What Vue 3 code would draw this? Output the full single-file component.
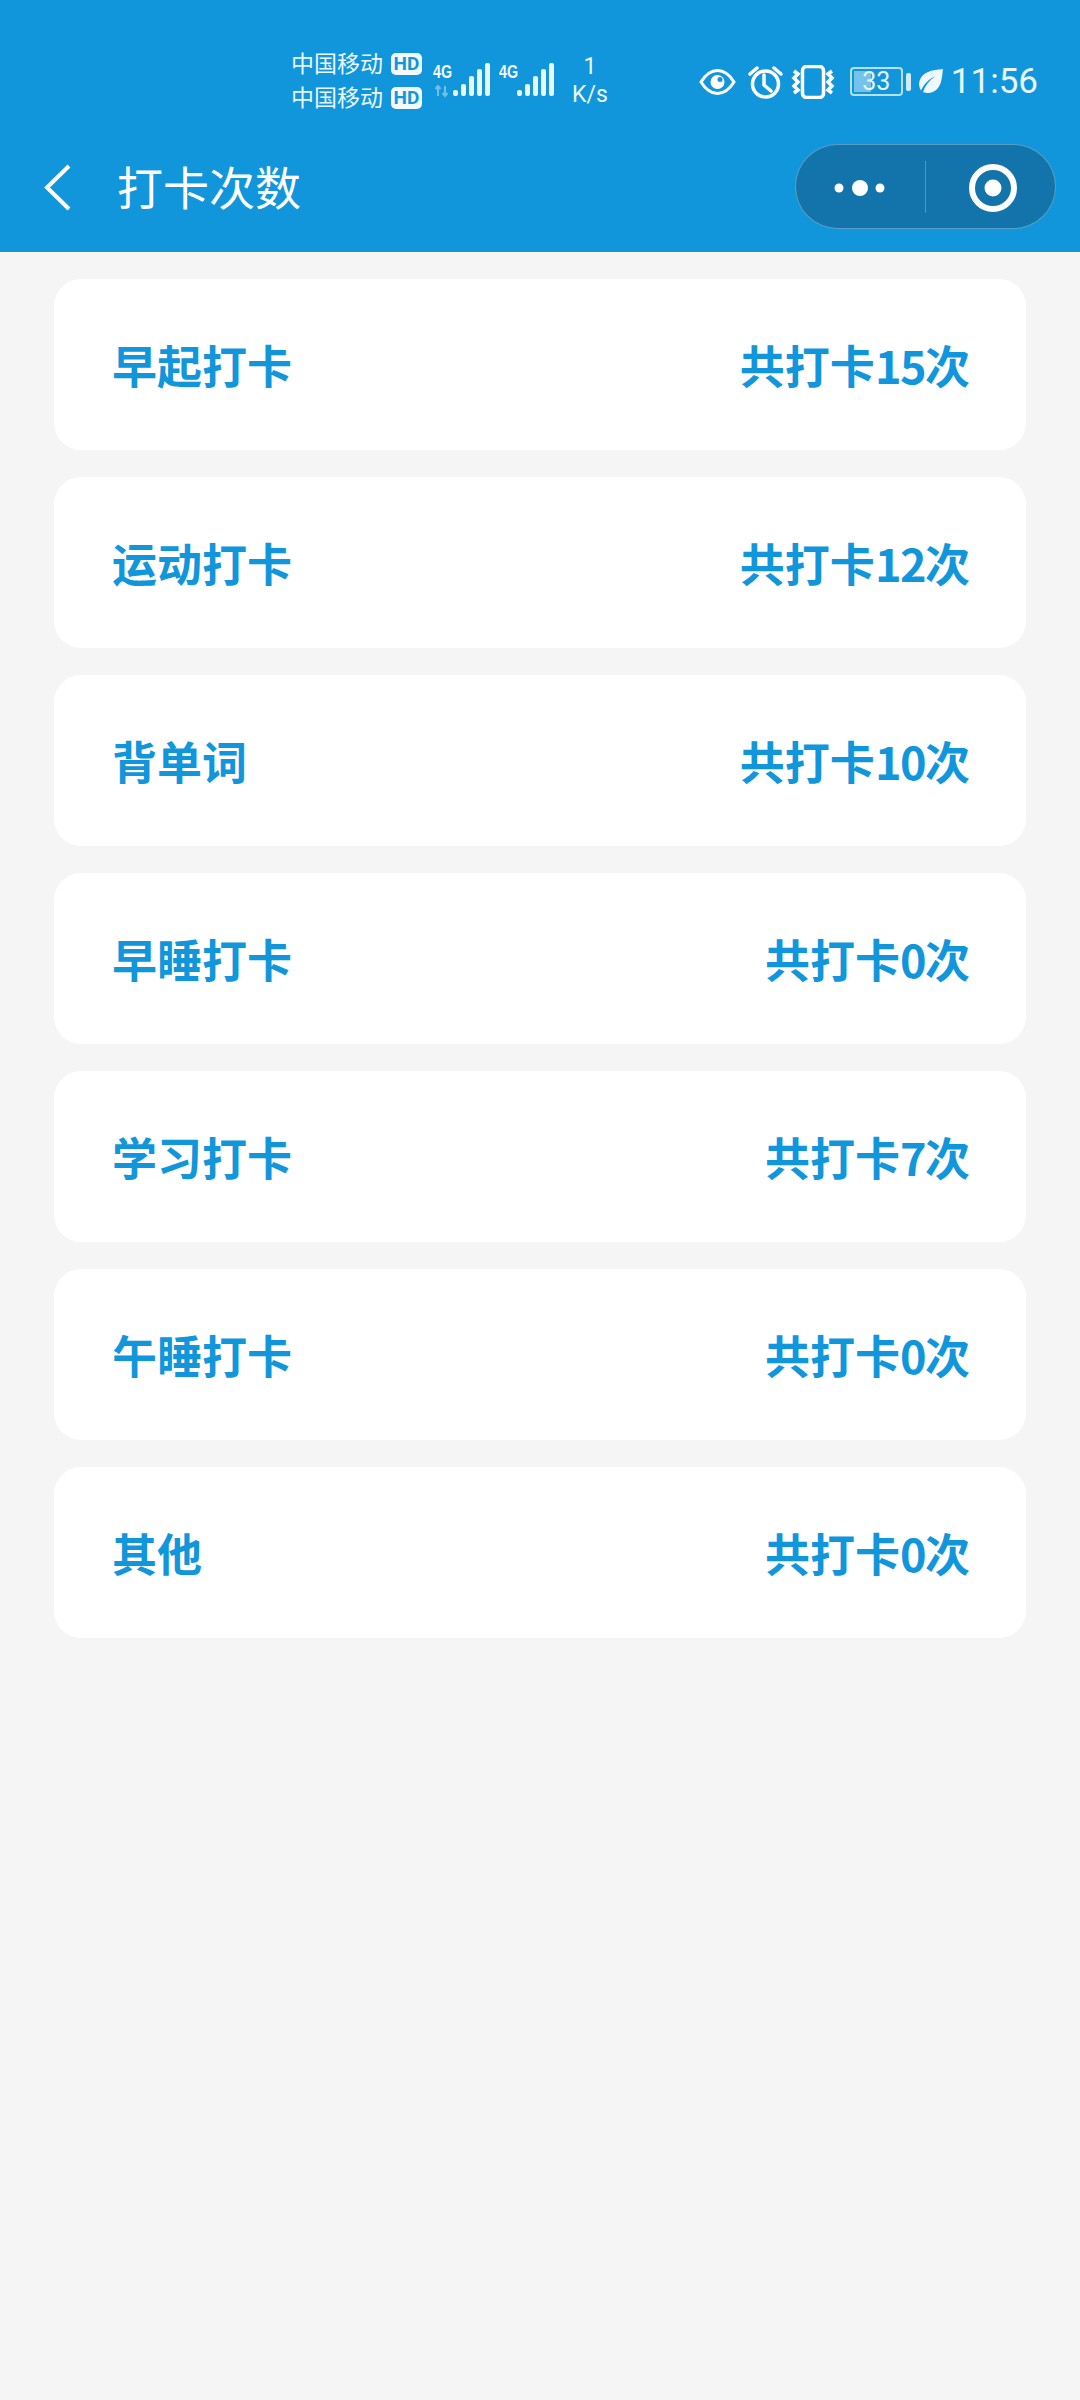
<template>
  <div class="page">
    <div class="top">
      <div class="status-bar">
        <div class="carriers">
          <div v-for="n in 2" :key="n" class="carrier">
            <span>中国移动</span>
            <span class="hd">HD</span>
          </div>
        </div>

        <svg class="signal" width="58" height="48" viewBox="0 -6 58 48">
          <text x="0" y="15" class="net" textLength="19" lengthAdjust="spacingAndGlyphs">4G</text>
          <path d="M5 33V23M2.500 26L5 23l2.500 3M12 23v10M9.500 30l2.500 3 2.500-3" stroke="#fff" stroke-opacity=".4" stroke-width="2" fill="none"/>
          <rect v-for="(h, i) in bars" :key="i" :x="20 + i * 8" :y="33 - h" width="5" :height="h" rx="2" fill="#eaf6fd"/>
        </svg>
        <svg class="signal second" width="56" height="48" viewBox="0 -6 56 48">
          <text x="0" y="15" class="net" textLength="19" lengthAdjust="spacingAndGlyphs">4G</text>
          <rect v-for="(h, i) in bars" :key="i" :x="18 + i * 8" :y="33 - h" width="5" :height="h" rx="2" fill="#eaf6fd"/>
        </svg>

        <div class="speed">
          <span>1</span>
          <span>K/s</span>
        </div>

        <div class="status-right">
          <svg width="37" height="28" viewBox="0 0 37 28" fill="none" stroke="#fff" stroke-width="3">
            <path d="M2 14C7 6 12 2.500 18.500 2.500S30 6 35 14c-5 8-10 11.500-16.500 11.500S7 22 2 14z"/>
            <circle cx="18.500" cy="14" r="7" fill="#fff" stroke="none"/>
            <circle cx="21" cy="11.500" r="2.500" fill="#1296db" stroke="none"/>
          </svg>
          <svg width="35" height="34" viewBox="0 0 35 34" fill="none" stroke="#fff" stroke-width="3.500">
            <circle cx="17.500" cy="19" r="13"/>
            <path d="M16 10v10l7 6M2 9l7-6M33 9l-7-6" stroke-linecap="round"/>
          </svg>
          <svg class="vibrate" width="44" height="34" viewBox="0 0 44 34" fill="none" stroke="#fff">
            <rect x="11.500" y="1.500" width="21" height="31" rx="4" stroke-width="3.500"/>
            <path d="M3 6l4 3-4 4 4 4-4 4 4 4-4 3M41 6l-4 3 4 4-4 4 4 4-4 4 4 3" stroke-width="3.500"/>
          </svg>
          <div class="battery">
            <div class="cell">
              <div class="level"></div>
              <span>33</span>
            </div>
            <div class="nub"></div>
          </div>
          <svg class="leaf" width="25" height="25" viewBox="0 0 25 25">
            <path d="M25 0C14 1 4 3 1.500 12c-1 4 0 7 1.500 9.500C6 15 11 10 17 7.500 11 11.500 7 17 5 23c5 2 11 1 15-4C24 14 24 7 25 0z" fill="#eef8fd"/>
          </svg>
          <span class="time">11:56</span>
        </div>
      </div>

      <div class="nav-bar">
        <svg class="back" width="27" height="47" viewBox="0 0 27 47" fill="none" stroke="#fff" stroke-width="4">
          <path d="M25 2L3 23.500 25 45"/>
        </svg>
        <span class="title">打卡次数</span>
        <div class="capsule">
          <div class="capsule-side">
            <svg width="62" height="18" viewBox="0 0 62 18" fill="#fff">
              <circle cx="9" cy="9" r="4.500"/>
              <circle cx="30" cy="9" r="8"/>
              <circle cx="50" cy="9" r="4.500"/>
            </svg>
          </div>
          <div class="capsule-line"></div>
          <div class="capsule-side">
            <svg class="ring" width="50" height="50" viewBox="0 0 50 50">
              <circle cx="25" cy="25" r="21" fill="none" stroke="#fff" stroke-width="6"/>
              <circle cx="25" cy="25" r="8.500" fill="#fff"/>
            </svg>
          </div>
        </div>
      </div>
    </div>

    <div class="list">
      <div v-for="item in items" :key="item.name" class="card">
        <span>{{ item.name }}</span>
        <span>共打卡<span class="count">{{ item.count }}</span>次</span>
      </div>
    </div>
  </div>
</template>

<script setup>
const bars = [6, 12, 20, 27, 33]

const items = [
  { name: '早起打卡', count: 15 },
  { name: '运动打卡', count: 12 },
  { name: '背单词', count: 10 },
  { name: '早睡打卡', count: 0 },
  { name: '学习打卡', count: 7 },
  { name: '午睡打卡', count: 0 },
  { name: '其他', count: 0 }
]
</script>

<style>
html,
body {
  background: #f5f5f5;
}
</style>

<style scoped>
.page {
  min-height: 2400px;
  background: #f5f5f5;
  font-family: Roboto, "Noto Sans CJK SC", sans-serif;
}

.top {
  height: 252px;
  background: #1296db;
  color: #fff;
}

.status-bar {
  display: flex;
  align-items: center;
  height: 144px;
  padding: 18px 42px 0 291px;
  box-sizing: border-box;
}

.carriers {
  display: flex;
  flex-direction: column;
  gap: 11px;
  font-size: 23px;
  line-height: 23px;
  color: #eaf6fd;
}

.carrier {
  display: flex;
  align-items: center;
  gap: 8px;
}

.hd {
  width: 31px;
  height: 22px;
  background: #f2fafe;
  border-radius: 5px;
  color: #1296db;
  font-size: 19px;
  font-weight: 700;
  line-height: 22px;
  text-align: center;
}

.signal {
  margin-left: 11px;
}

.signal.second {
  margin-left: 8px;
}

.net {
  fill: #f2fafe;
  font-family: "Liberation Sans", sans-serif;
  font-size: 19px;
  font-weight: 700;
}

.speed {
  display: flex;
  flex-direction: column;
  align-items: center;
  width: 38px;
  margin-left: 16px;
  font-size: 23px;
  line-height: 28px;
  color: #eaf6fd;
}

.status-right {
  display: flex;
  align-items: center;
  margin-left: auto;
  margin-top: 1px;
  gap: 12px;
}

.vibrate {
  margin-left: -4px;
}

.battery {
  display: flex;
  align-items: center;
  gap: 3px;
  margin-left: 3px;
}

.cell {
  position: relative;
  width: 53px;
  height: 29px;
  box-sizing: border-box;
  border: 2px solid #b5e0f6;
  border-radius: 4px;
  text-align: center;
  font-size: 25px;
  line-height: 25px;
  color: #e4f4fc;
}

.level {
  position: absolute;
  left: 2px;
  top: 2px;
  bottom: 2px;
  width: 17px;
  background: rgba(255, 255, 255, 0.42);
}

.cell span {
  position: relative;
}

.nub {
  width: 5px;
  height: 18px;
  background: #d3edfa;
  border-radius: 2px;
}

.leaf {
  margin-left: -5px;
}

.time {
  margin-left: -4px;
  font-size: 35px;
  line-height: 36px;
  color: #e8f6fd;
}

.nav-bar {
  display: flex;
  align-items: center;
  height: 85px;
  padding: 0 24px 0 44px;
}

.back {
  margin-top: 2px;
  margin-right: 46px;
}

.title {
  margin-top: 5px;
  font-size: 46px;
  line-height: 85px;
}

.capsule {
  display: flex;
  align-items: center;
  width: 261px;
  height: 85px;
  margin-left: auto;
  box-sizing: border-box;
  background: #1274ab;
  border: 1.5px solid rgba(255, 255, 255, 0.3);
  border-radius: 43px;
}

.capsule-side {
  flex: 1;
  display: flex;
  justify-content: center;
  align-items: center;
  padding-top: 2px;
}

.ring {
  margin-left: 5px;
}

.capsule-line {
  width: 1px;
  height: 52px;
  background: rgba(255, 255, 255, 0.25);
}

.list {
  display: flex;
  flex-direction: column;
  gap: 27px;
  padding: 27px 54px 0;
}

.card {
  display: flex;
  justify-content: space-between;
  align-items: center;
  height: 171px;
  padding: 0 56px 0 58px;
  box-sizing: border-box;
  background: #fff;
  border-radius: 27px;
  color: #1296db;
  font-size: 45px;
  font-weight: 700;
  font-family: "Noto Sans CJK SC", sans-serif;
}

.count {
  letter-spacing: -1.5px;
}
</style>
